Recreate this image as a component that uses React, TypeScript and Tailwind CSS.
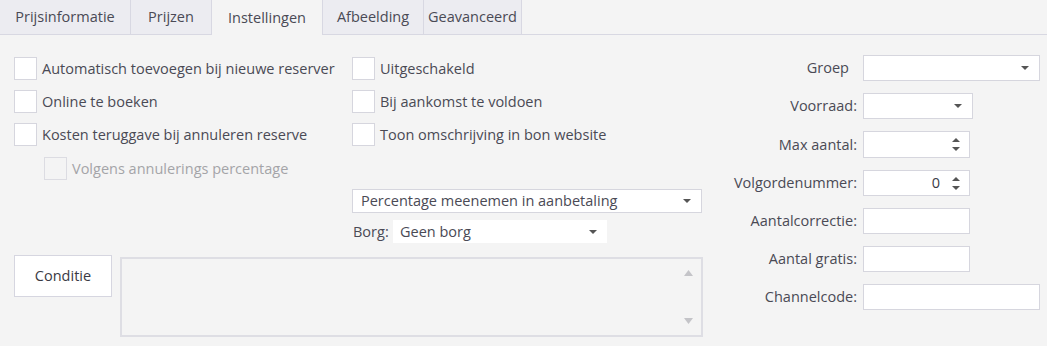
import React from "react";

const font = { fontFamily: '"Open Sans", "Noto Sans", sans-serif' };

function Caret({ className = "" }: { className?: string }) {
  return (
    <svg width="8" height="4" viewBox="0 0 8 4" className={className}>
      <path d="M0 0 L8 0 L4 4 Z" fill="#555" />
    </svg>
  );
}

function Spinner() {
  return (
    <div className="flex flex-col items-center gap-[5px]">
      <svg width="8" height="4" viewBox="0 0 8 4">
        <path d="M0 4 L8 4 L4 0 Z" fill="#555" />
      </svg>
      <svg width="8" height="4" viewBox="0 0 8 4">
        <path d="M0 0 L8 0 L4 4 Z" fill="#555" />
      </svg>
    </div>
  );
}

function Check({ label, disabled = false }: { label: string; disabled?: boolean }) {
  return (
    <div className="flex items-center h-[23px]">
      <div
        className={`w-[23px] h-[23px] border ${
          disabled ? "border-[#dcdce2] bg-[#f4f4f4]" : "border-[#d6d6de] bg-white"
        }`}
      />
      <span className={`ml-[5px] whitespace-nowrap ${disabled ? "text-[#a4a4a8]" : "text-[#4a4a55]"}`}>{label}</span>
    </div>
  );
}

const tabs = ["Prijsinformatie", "Prijzen", "Instellingen", "Afbeelding", "Geavanceerd"];
const tabW = [131, 81, 112, 101, 98];

export default function App() {
  return (
    <div className="w-[1047px] h-[346px] bg-[#f4f4f4] text-[14.5px] text-[#4a4a55] overflow-hidden" style={font}>
      {/* tabs */}
      <div className="flex h-[35px] border-b border-[#d8d8e2]">
        {tabs.map((t, i) => {
          const active = i === 2;
          return (
            <div
              key={t}
              style={{ width: tabW[i] }}
              className={`flex items-center justify-center border-r border-[#d8d8e2] ${
                active ? "bg-[#f4f4f4] h-[35px] border-l -ml-px" : "bg-[#ececf1] h-[34px]"
              }`}
            >
              {t}
            </div>
          );
        })}
      </div>

      <div className="flex">
        {/* left area */}
        <div className="w-[720px] pl-[14px]">
          <div className="flex pt-[22px]">
            <div className="w-[338px] flex flex-col gap-[10px]">
              <Check label="Automatisch toevoegen bij nieuwe reserver" />
              <Check label="Online te boeken" />
              <Check label="Kosten teruggave bij annuleren reserve" />
              <div className="pl-[30px] pt-px">
                <Check label="Volgens annulerings percentage" disabled />
              </div>
            </div>
            <div className="flex flex-col">
              <div className="flex flex-col gap-[10px]">
                <Check label="Uitgeschakeld" />
                <Check label="Bij aankomst te voldoen" />
                <Check label="Toon omschrijving in bon website" />
              </div>
              <div className="mt-[43px] w-[350px] h-[24px] bg-white border border-[#d6d6de] flex items-center justify-between pl-[8px] pr-[10px]">
                <span>Percentage meenemen in aanbetaling</span>
                <Caret />
              </div>
              <div className="mt-[7px] flex items-center h-[23px]">
                <span className="ml-[1px] w-[40px]">Borg:</span>
                <div className="w-[214px] h-[23px] bg-white flex items-center justify-between pl-[7px] pr-[10px]">
                  <span>Geen borg</span>
                  <Caret />
                </div>
              </div>
            </div>
          </div>

          <div className="flex mt-[12px] gap-[8px]">
            <div className="w-[98px] h-[42px] bg-white border border-[#d6d6e0] flex items-center justify-center text-[#3a3a44]">
              Conditie
            </div>
            <div className="mt-[2px] w-[583px] h-[80px] border-2 border-[#dedee4] flex flex-col items-end justify-between py-[11px] pr-[8px]">
              <svg width="9" height="6" viewBox="0 0 9 6">
                <path d="M0 6 L9 6 L4.5 0 Z" fill="#c4c4c8" />
              </svg>
              <svg width="9" height="6" viewBox="0 0 9 6">
                <path d="M0 0 L9 0 L4.5 6 Z" fill="#c4c4c8" />
              </svg>
            </div>
          </div>
        </div>

        {/* right area */}
        <div className="flex-1 pt-[20px]">
          <div className="grid grid-cols-[137px_1fr] gap-x-[6px] gap-y-[12px] items-center">
            <span className="text-right pr-[8px]">Groep</span>
            <div className="w-[177px] h-[26px] bg-white border border-[#d6d6de] flex items-center justify-end pr-[10px]">
              <Caret />
            </div>

            <span className="text-right">Voorraad:</span>
            <div className="w-[110px] h-[26px] bg-white border border-[#d6d6de] flex items-center justify-end pr-[10px]">
              <Caret />
            </div>

            <span className="text-right">Max aantal:</span>
            <div className="w-[107px] h-[27px] bg-white border border-[#d6d6de] flex items-center justify-end pr-[9px]">
              <Spinner />
            </div>

            <span className="text-right whitespace-nowrap">Volgordenummer:</span>
            <div className="w-[107px] h-[26px] bg-white border border-[#d6d6de] flex items-center justify-end pr-[9px]">
              <span className="mr-[12px] text-[#3a3a44]">0</span>
              <Spinner />
            </div>

            <span className="text-right">Aantalcorrectie:</span>
            <div className="w-[107px] h-[26px] bg-white border border-[#d6d6de]" />

            <span className="text-right">Aantal gratis:</span>
            <div className="w-[107px] h-[26px] bg-white border border-[#d6d6de]" />

            <span className="text-right">Channelcode:</span>
            <div className="w-[177px] h-[26px] bg-white border border-[#d6d6de]" />
          </div>
        </div>
      </div>
    </div>
  );
}
